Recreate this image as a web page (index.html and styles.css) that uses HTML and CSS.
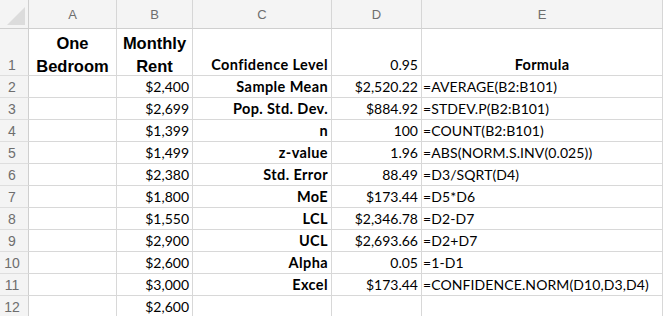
FILE: index.html
```html
<!DOCTYPE html>
<html>
<head>
<meta charset="utf-8">
<link rel="stylesheet" href="styles.css">
</head>
<body>
<div class="sheet">
  <div class="corner"><span class="tri"></span></div>
  <div class="colhead">A</div>
  <div class="colhead">B</div>
  <div class="colhead">C</div>
  <div class="colhead">D</div>
  <div class="colhead">E</div>

  <div class="rowhead">1</div>
  <div class="cell head-arial">One<br>Bedroom</div>
  <div class="cell head-arial">Monthly<br>Rent</div>
  <div class="cell label">Confidence Level</div>
  <div class="cell num">0.95</div>
  <div class="cell title">Formula</div>

  <div class="rowhead">2</div><div class="cell"></div><div class="cell num">$2,400</div><div class="cell label">Sample Mean</div><div class="cell num">$2,520.22</div><div class="cell fx">=AVERAGE(B2:B101)</div>
  <div class="rowhead">3</div><div class="cell"></div><div class="cell num">$2,699</div><div class="cell label">Pop. Std. Dev.</div><div class="cell num">$884.92</div><div class="cell fx">=STDEV.P(B2:B101)</div>
  <div class="rowhead">4</div><div class="cell"></div><div class="cell num">$1,399</div><div class="cell label">n</div><div class="cell num">100</div><div class="cell fx">=COUNT(B2:B101)</div>
  <div class="rowhead">5</div><div class="cell"></div><div class="cell num">$1,499</div><div class="cell label">z-value</div><div class="cell num">1.96</div><div class="cell fx">=ABS(NORM.S.INV(0.025))</div>
  <div class="rowhead">6</div><div class="cell"></div><div class="cell num">$2,380</div><div class="cell label">Std. Error</div><div class="cell num">88.49</div><div class="cell fx">=D3/SQRT(D4)</div>
  <div class="rowhead">7</div><div class="cell"></div><div class="cell num">$1,800</div><div class="cell label">MoE</div><div class="cell num">$173.44</div><div class="cell fx">=D5*D6</div>
  <div class="rowhead">8</div><div class="cell"></div><div class="cell num">$1,550</div><div class="cell label">LCL</div><div class="cell num">$2,346.78</div><div class="cell fx">=D2-D7</div>
  <div class="rowhead">9</div><div class="cell"></div><div class="cell num">$2,900</div><div class="cell label">UCL</div><div class="cell num">$2,693.66</div><div class="cell fx">=D2+D7</div>
  <div class="rowhead">10</div><div class="cell"></div><div class="cell num">$2,600</div><div class="cell label">Alpha</div><div class="cell num">0.05</div><div class="cell fx">=1-D1</div>
  <div class="rowhead">11</div><div class="cell"></div><div class="cell num">$3,000</div><div class="cell label">Excel</div><div class="cell num">$173.44</div><div class="cell fx">=CONFIDENCE.NORM(D10,D3,D4)</div>
  <div class="rowhead">12</div><div class="cell"></div><div class="cell num">$2,600</div><div class="cell label"></div><div class="cell num"></div><div class="cell fx"></div>
</div>
</body>
</html>
```
FILE: styles.css
```css
html, body {
  margin: 0;
  padding: 0;
  background: #ffffff;
}
.sheet {
  display: grid;
  grid-template-columns: 29px 88px 76px 139px 90px 241px;
  grid-template-rows: 29px 47px repeat(11, 22px);
  width: 663px;
  height: 316px;
  overflow: hidden;
  font-family: Lato, "Liberation Sans", sans-serif;
  font-size: 14px;
  color: #000;
}
.corner {
  position: relative;
  background: #f4f4f4;
  border-right: 1px solid #cfcfcf;
  border-bottom: 1px solid #cfcfcf;
}
.tri {
  position: absolute;
  left: 7px;
  top: 7px;
  width: 0;
  height: 0;
  border-left: 18px solid transparent;
  border-bottom: 18px solid #dcdcdc;
}
.colhead {
  background: #f4f4f4;
  border-right: 1px solid #d6d6d6;
  border-bottom: 1px solid #cfcfcf;
  display: flex;
  align-items: center;
  justify-content: center;
  font-family: "Liberation Sans", Arial, sans-serif;
  font-size: 13px;
  color: #6e6e6e;
}
.rowhead {
  background: #f4f4f4;
  border-right: 1px solid #cfcfcf;
  border-bottom: 1px solid #dedede;
  display: flex;
  align-items: flex-end;
  justify-content: center;
  padding: 0 4px 2px 0;
  font-family: "Liberation Sans", Arial, sans-serif;
  font-size: 14px;
  color: #6e6e6e;
}
.cell {
  border-right: 1px solid #d8d8d8;
  border-bottom: 1px solid #d8d8d8;
  display: flex;
  align-items: flex-end;
  padding: 0 3px 2px 3px;
  white-space: nowrap;
  overflow: hidden;
}
.head-arial {
  font-family: "Liberation Sans", Arial, sans-serif;
  font-weight: bold;
  font-size: 16.5px;
  line-height: 23px;
  text-align: center;
  justify-content: center;
  align-items: flex-start;
  padding: 3px 3px 0 3px;
  white-space: normal;
}
.label {
  font-weight: bold;
  font-size: 14.5px;
  letter-spacing: 0.4px;
  justify-content: flex-end;
}
.title {
  font-weight: bold;
  font-size: 14.5px;
  letter-spacing: 0.3px;
  justify-content: center;
}
.num {
  justify-content: flex-end;
}
.fx {
  justify-content: flex-start;
  padding-left: 1px;
  letter-spacing: 0.1px;
}
```
